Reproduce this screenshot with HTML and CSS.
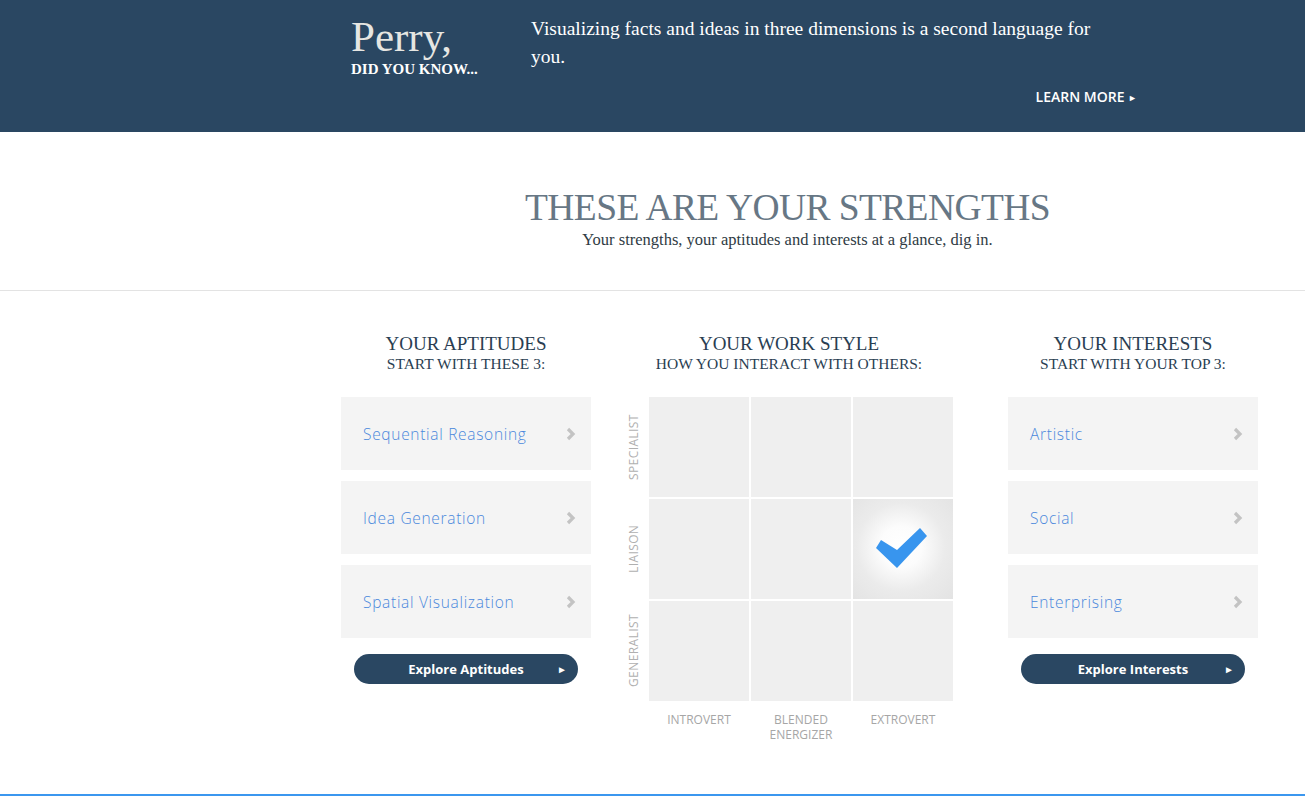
FILE: index.html
```html
<!DOCTYPE html>
<html lang="en">

<head>
  <meta charset="UTF-8">
  <meta name="viewport" content="width=device-width, initial-scale=1.0">
  <title>Your Strengths</title>
  <link rel="stylesheet" href="styles.css">
</head>

<body>
  <header class="hero">
    <div class="hero-inner">
      <div class="greeting">
        <h1>Perry,</h1>
        <p>DID YOU KNOW...</p>
      </div>
      <div class="fact">
        <p>Visualizing facts and ideas in three dimensions is a second language for you.</p>
        <a href="#" class="learn-more">LEARN MORE <span class="tri">&#9658;</span></a>
      </div>
    </div>
  </header>

  <section class="intro">
    <h2>THESE ARE YOUR STRENGTHS</h2>
    <p>Your strengths, your aptitudes and interests at a glance, dig in.</p>
  </section>

  <section class="strengths">
    <div class="strengths-inner">
      <div class="column">
        <h3>YOUR APTITUDES</h3>
        <h4>START WITH THESE 3:</h4>
        <a href="#" class="card">Sequential Reasoning <svg class="chev" viewBox="0 0 10 14"><polyline points="2,2 7,7 2,12" /></svg></a>
        <a href="#" class="card">Idea Generation <svg class="chev" viewBox="0 0 10 14"><polyline points="2,2 7,7 2,12" /></svg></a>
        <a href="#" class="card">Spatial Visualization <svg class="chev" viewBox="0 0 10 14"><polyline points="2,2 7,7 2,12" /></svg></a>
        <a href="#" class="pill">Explore Aptitudes <span class="tri">&#9658;</span></a>
      </div>

      <div class="workstyle">
        <h3>YOUR WORK STYLE</h3>
        <h4>HOW YOU INTERACT WITH OTHERS:</h4>
        <div class="matrix">
          <div class="row-label">SPECIALIST</div>
          <div class="cell"></div>
          <div class="cell"></div>
          <div class="cell"></div>
          <div class="row-label">LIAISON</div>
          <div class="cell"></div>
          <div class="cell"></div>
          <div class="cell active">
            <svg viewBox="0 0 100 100"><polygon points="28,41 23,49 44,69 74,37 67,29 44,51" /></svg>
          </div>
          <div class="row-label">GENERALIST</div>
          <div class="cell"></div>
          <div class="cell"></div>
          <div class="cell"></div>
          <div></div>
          <div class="col-label">INTROVERT</div>
          <div class="col-label">BLENDED<br>ENERGIZER</div>
          <div class="col-label">EXTROVERT</div>
        </div>
      </div>

      <div class="column interests">
        <h3>YOUR INTERESTS</h3>
        <h4>START WITH YOUR TOP 3:</h4>
        <a href="#" class="card">Artistic <svg class="chev" viewBox="0 0 10 14"><polyline points="2,2 7,7 2,12" /></svg></a>
        <a href="#" class="card">Social <svg class="chev" viewBox="0 0 10 14"><polyline points="2,2 7,7 2,12" /></svg></a>
        <a href="#" class="card">Enterprising <svg class="chev" viewBox="0 0 10 14"><polyline points="2,2 7,7 2,12" /></svg></a>
        <a href="#" class="pill">Explore Interests <span class="tri">&#9658;</span></a>
      </div>
    </div>
  </section>

  <footer class="bottom-line"></footer>
</body>

</html>
```

FILE: styles.css
```css
body {
  margin: 0;
  font-family: 'Liberation Serif', serif;
  background: #fff;
  color: #333;
}

a {
  text-decoration: none;
}

/* top banner */
.hero {
  background: #2a4762;
  color: #fff;
  height: 132px;
}

.hero-inner {
  display: flex;
  margin-left: 351px;
  padding-top: 14px;
}

.greeting {
  width: 180px;
}

.greeting h1 {
  margin: 0;
  font-size: 43px;
  font-weight: normal;
  line-height: 46px;
  color: #e6e6e2;
}

.greeting p {
  margin: 0;
  font-size: 15px;
  font-weight: bold;
  line-height: 18px;
}

.fact {
  width: 606px;
  display: flex;
  flex-direction: column;
}

.fact p {
  margin: 1px 0 0;
  max-width: 580px;
  font-size: 19.5px;
  line-height: 28px;
}

.learn-more {
  align-self: flex-end;
  margin-top: 16px;
  color: #fff;
  font-family: 'Open Sans', sans-serif;
  font-size: 14px;
  font-weight: 600;
}

.learn-more .tri {
  font-size: 9px;
  vertical-align: 1px;
}

/* intro */
.intro {
  height: 159px;
  border-bottom: 1px solid #e3e3e3;
  box-sizing: border-box;
  text-align: center;
  padding-left: 270px;
  padding-top: 55px;
}

.intro h2 {
  margin: 0;
  font-size: 37.5px;
  font-weight: normal;
  line-height: 42px;
  letter-spacing: -0.6px;
  color: #677785;
}

.intro p {
  margin: 0;
  font-size: 16.5px;
  line-height: 22px;
  color: #2f3b44;
}

/* strengths columns */
.strengths {
  height: 503px;
}

.strengths-inner {
  display: flex;
  margin-left: 341px;
  padding-top: 43px;
}

.column {
  width: 250px;
  display: flex;
  flex-direction: column;
}

.interests {
  margin-left: 49px;
}

.column h3, .workstyle h3 {
  margin: 0;
  text-align: center;
  font-size: 19px;
  font-weight: normal;
  line-height: 20px;
  color: #2a3e52;
}

.column h4, .workstyle h4 {
  margin: 0 0 23px;
  text-align: center;
  font-size: 15.5px;
  font-weight: normal;
  line-height: 20px;
  color: #2a3e52;
}

.card {
  display: flex;
  align-items: center;
  justify-content: space-between;
  height: 73px;
  margin-bottom: 11px;
  padding: 0 15px 0 22px;
  background: #f4f4f4;
  color: #4a88dc;
  font-family: 'Open Sans', sans-serif;
  font-size: 15.5px;
  font-weight: 300;
  letter-spacing: 0.7px;
}

.chev {
  width: 10px;
  height: 14px;
}

.chev polyline {
  fill: none;
  stroke: #c3c3c3;
  stroke-width: 3.2;
}

.pill {
  display: block;
  position: relative;
  width: 224px;
  height: 30px;
  margin: 5px auto 0;
  border-radius: 15px;
  background: #2a4762;
  color: #fff;
  text-align: center;
  font-family: 'Open Sans', sans-serif;
  font-size: 13px;
  font-weight: bold;
  line-height: 30px;
}

.pill .tri {
  position: absolute;
  right: 11px;
  font-size: 10px;
}

/* work style matrix */
.workstyle {
  width: 340px;
  margin-left: 28px;
}

.matrix {
  display: grid;
  grid-template-columns: 28px repeat(3, 100px);
  grid-template-rows: repeat(3, 100px) auto;
  gap: 2px;
}

.cell {
  background: #efefef;
}

.cell.active {
  background: radial-gradient(circle at 48% 48%, #fff 0, #fcfcfc 28%, #ebebeb 60%, #e3e3e3 100%);
}

.cell.active svg {
  width: 100px;
  height: 100px;
  display: block;
}

.cell.active polygon {
  fill: #3895ee;
}

.row-label {
  display: flex;
  justify-content: center;
  align-items: center;
  writing-mode: vertical-rl;
  transform: rotate(180deg);
  font-family: 'Open Sans', sans-serif;
  font-size: 12px;
  color: #b0b0b0;
  letter-spacing: 0.4px;
}

.col-label {
  padding-top: 9px;
  text-align: center;
  font-family: 'Open Sans', sans-serif;
  font-size: 12px;
  line-height: 15px;
  color: #a6a6a6;
}

.bottom-line {
  border-top: 2px solid #3b97ef;
}
```
